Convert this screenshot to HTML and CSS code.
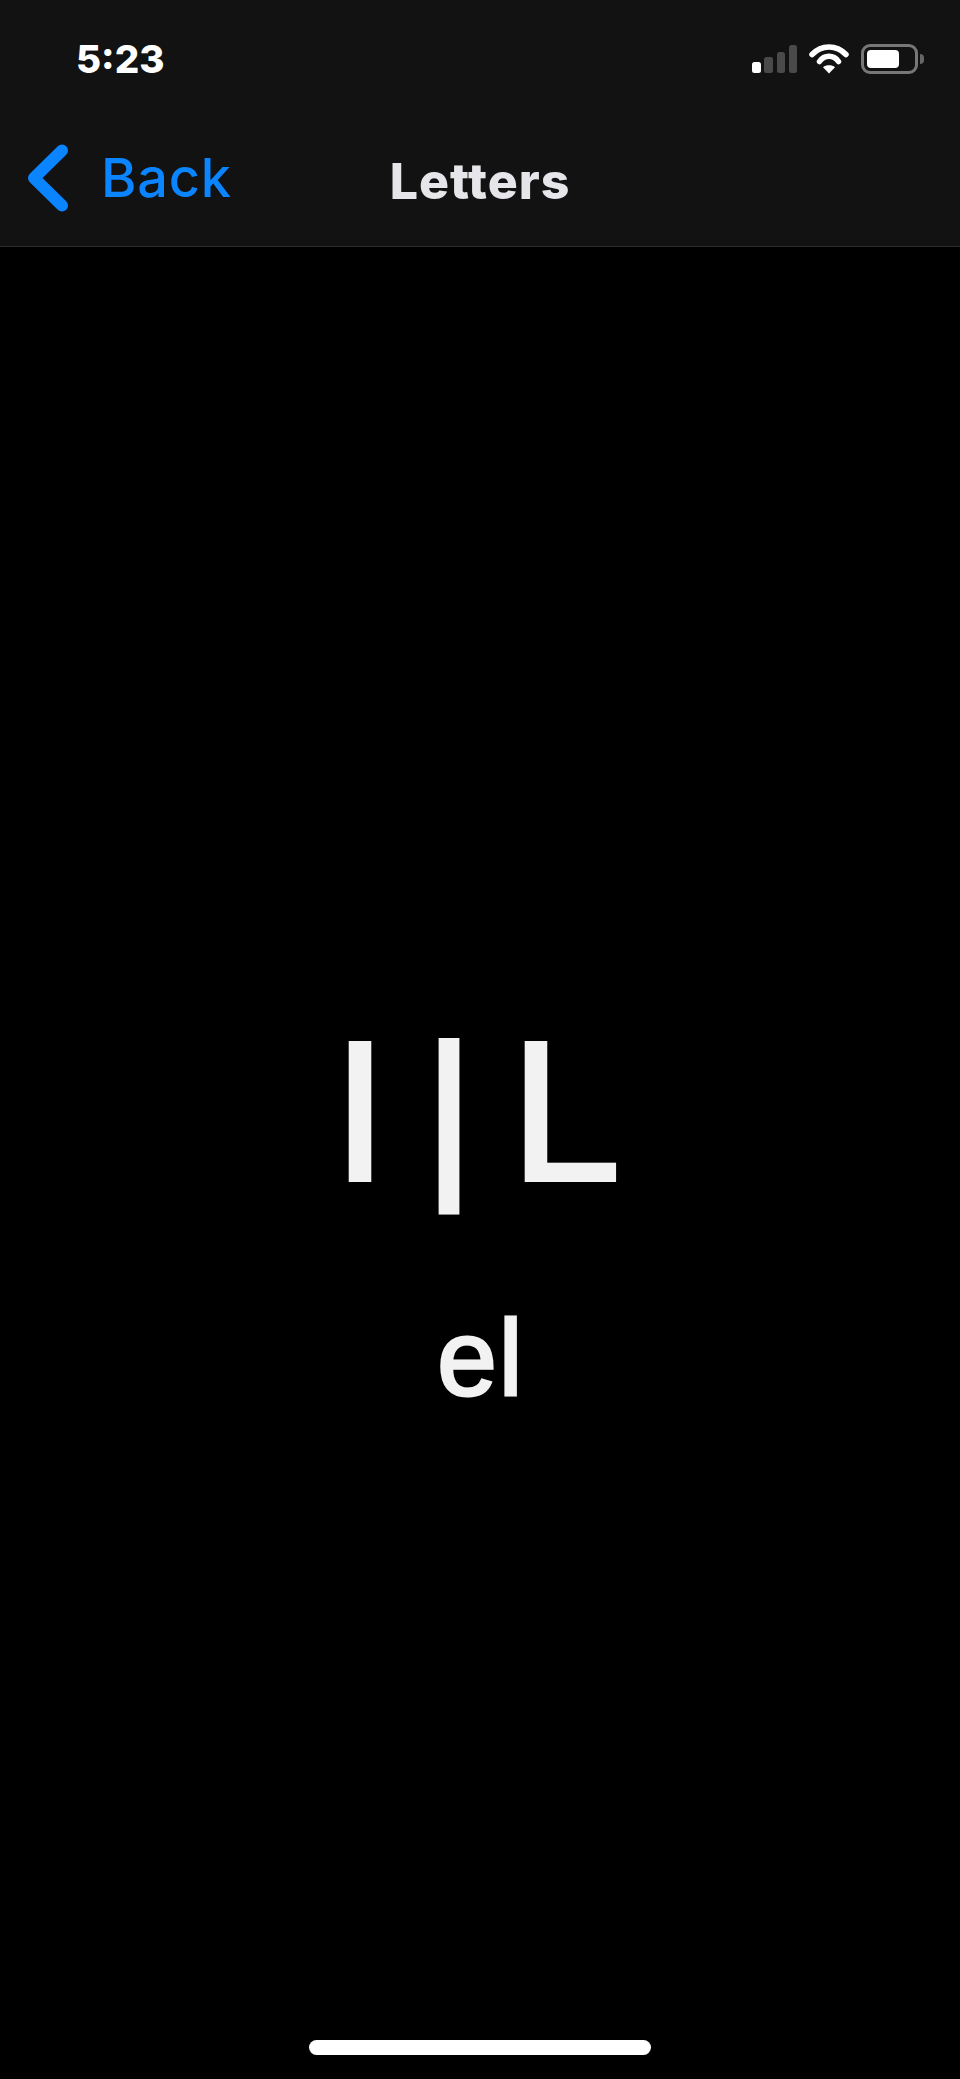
FILE: index.html
```html
<!DOCTYPE html>
<html lang="en">
<head>
<meta charset="utf-8">
<title>Letters</title>
<link rel="stylesheet" href="styles.css">
</head>
<body>
<div class="screen">
  <header class="header">
    <div class="status">
      <span class="time">5:23</span>
      <div class="status-icons">
        <svg class="signal" width="48" height="28" viewBox="0 0 48 28" aria-hidden="true">
          <rect x="0" y="17" width="9" height="11" rx="2.5" fill="#fff"/>
          <rect x="12" y="12" width="9" height="16" rx="2.5" fill="#4a4a4a"/>
          <rect x="25" y="7" width="8" height="21" rx="2.5" fill="#4a4a4a"/>
          <rect x="37" y="0" width="8" height="28" rx="2.5" fill="#4a4a4a"/>
        </svg>
        <svg class="wifi" width="40" height="30" viewBox="0 0 40 30" aria-hidden="true">
          <path d="M3 10.5C12.5 0.5 27.5 0.5 37 10.5" fill="none" stroke="#fff" stroke-width="5.5" stroke-linecap="round"/>
          <path d="M10.5 17.5C15.5 10.5 24.5 10.5 29.5 17.5" fill="none" stroke="#fff" stroke-width="5.5" stroke-linecap="round"/>
          <path d="M14 23.2C17 20.6 23 20.6 26 23.2L20 29.5Z" fill="#fff"/>
        </svg>
        <div class="battery"><div class="battery-level"></div></div>
        <div class="battery-nub"></div>
      </div>
    </div>
    <nav class="nav">
      <a class="back">
        <svg class="chevron" width="42" height="68" viewBox="0 0 42 68" aria-hidden="true">
          <path d="M35 6.5L7 34L35 61.5" fill="none" stroke="#0a84ff" stroke-width="12" stroke-linecap="round" stroke-linejoin="round"/>
        </svg>
        <span>Back</span>
      </a>
      <h1 class="title">Letters</h1>
      <span></span>
    </nav>
  </header>
  <main class="content">
    <p class="glyphs">I <span class="bar">|</span> L</p>
    <p class="name">el</p>
  </main>
  <footer class="home"><div class="home-bar"></div></footer>
</div>
</body>
</html>
```

FILE: styles.css
```css
* { box-sizing: border-box; }
html, body { margin: 0; padding: 0; background: #000; }
body { font-family: Inter, "Liberation Sans", sans-serif; }
.screen { width: 960px; height: 2079px; display: flex; flex-direction: column; background: #000; overflow: hidden; }
.header { height: 247px; background: #121212; border-bottom: 1px solid #2c2c2e; flex: none; }
.status { height: 118px; padding: 37px 36px 0 76px; display: flex; justify-content: space-between; align-items: flex-start; }
.time { color: #fff; font-size: 38.5px; font-weight: 800; line-height: 44px; }
.status-icons { display: flex; align-items: center; margin-top: 7px; }
.signal { margin-right: 9px; }
.wifi { margin-right: 12px; }
.battery { width: 57px; height: 30px; border: 3px solid #777; border-radius: 9px; padding: 3px 0 3px 3px; }
.battery-level { width: 32px; height: 100%; background: #fff; border-radius: 4px; }
.battery-nub { width: 4px; height: 10px; background: #666; border-radius: 0 4px 4px 0; margin-left: 2px; }
.nav { display: grid; grid-template-columns: 1fr auto 1fr; align-items: center; height: 120px; padding: 0 27px; }
.back { display: flex; align-items: center; color: #0a84ff; font-size: 54px; line-height: 68px; font-weight: 500; letter-spacing: 0.8px; }
.chevron { margin-right: 32px; flex: none; }
.title { margin: 6px 0 0; color: #e5e5ea; font-size: 50px; font-weight: 800; line-height: 60px; letter-spacing: 1px; }
.content { flex: 1; display: flex; flex-direction: column; align-items: center; padding-top: 765px; color: #f2f2f2; font-family: "Liberation Sans", Arial, sans-serif; }
.glyphs { margin: 0; font-size: 198px; line-height: 200px; white-space: pre; word-spacing: -17px; padding-right: 7px; -webkit-text-stroke: 4px #f2f2f2; }
.bar { font-size: 181px; line-height: 0; vertical-align: 7px; -webkit-text-stroke: 6px #f2f2f2; }
.name { margin: 86px 0 0; font-size: 107px; line-height: 120px; letter-spacing: 2px; padding-left: 2px; -webkit-text-stroke: 3px #f2f2f2; }
.home { height: 39px; flex: none; display: flex; justify-content: center; }
.home-bar { width: 342px; height: 15px; background: #fff; border-radius: 8px; }
```
